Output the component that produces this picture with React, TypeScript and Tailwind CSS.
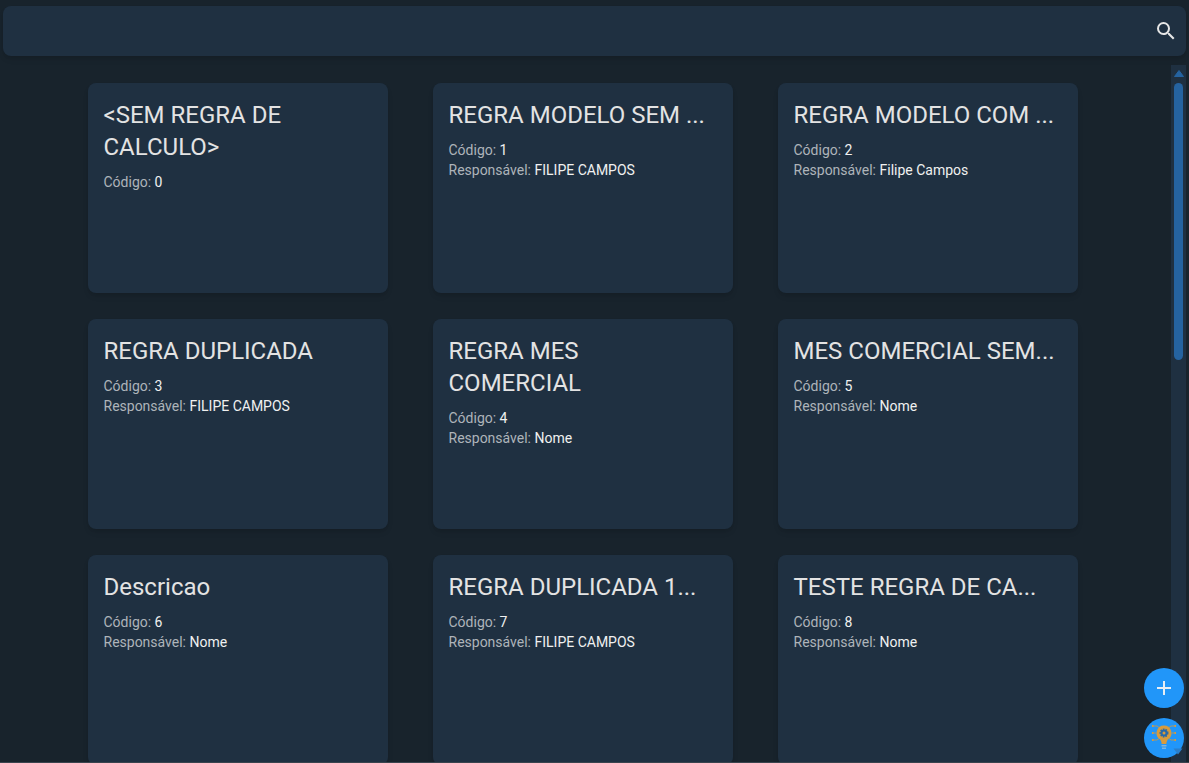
import React from "react";
import { MdAdd, MdSearch } from "react-icons/md";

interface Regra {
    codigo: number;
    titulo: string;
    responsavel?: string;
}

const regras: Regra[] = [
    { codigo: 0, titulo: "<SEM REGRA DE CALCULO>" },
    { codigo: 1, titulo: "REGRA MODELO SEM ...", responsavel: "FILIPE CAMPOS" },
    { codigo: 2, titulo: "REGRA MODELO COM ...", responsavel: "Filipe Campos" },
    { codigo: 3, titulo: "REGRA DUPLICADA", responsavel: "FILIPE CAMPOS" },
    { codigo: 4, titulo: "REGRA MES COMERCIAL", responsavel: "Nome" },
    { codigo: 5, titulo: "MES COMERCIAL SEM...", responsavel: "Nome" },
    { codigo: 6, titulo: "Descricao", responsavel: "Nome" },
    { codigo: 7, titulo: "REGRA DUPLICADA 1...", responsavel: "FILIPE CAMPOS" },
    { codigo: 8, titulo: "TESTE REGRA DE CA...", responsavel: "Nome" },
];

// lamp with a gear inside and circuit traces on both sides
const BulbIcon = () => (
    <svg viewBox="0 0 32 32" className="h-8 w-8">
        <path d="M16 3.500a7.500 7.500 0 0 0-4.500 13.500c1.200 1 2 2.500 2.200 5h4.600c.2-2.500 1-4 2.200-5A7.500 7.500 0 0 0 16 3.500z" fill="#d89b3c" />
        <circle cx="16" cy="11" r="3.500" fill="#2a6aa8" stroke="#2a6aa8" strokeWidth="2" strokeDasharray="1.500 1" />
        <circle cx="16" cy="11" r="1.500" fill="#d89b3c" />
        <rect x="13.500" y="23" width="5" height="1.500" fill="#7fb4dc" />
        <rect x="14" y="25.500" width="4" height="1.500" fill="#7fb4dc" />
        <path d="M11 5.500L9 4H5M8 11H5M11 16.500L9 18H5M21 5.500L23 4H27M24 11H27M21 16.500L23 18H27" fill="none" stroke="#c9974a" strokeWidth="1" opacity="0.85" />
        <path d="M4 4h1.500M4 11h1.500M4 18h1.500M26.500 4H28M26.500 11H28M26.500 18H28" fill="none" stroke="#d89b3c" strokeWidth="2" />
    </svg>
);

const RegraCard = ({ regra }: { regra: Regra }) => (
    <div className="h-[210px] rounded-lg bg-[#1f3041] py-4 pr-[16.5px] pl-[15.5px] shadow-md">
        <h2 className="text-2xl leading-8 font-normal text-[#e3e3e3]">{regra.titulo}</h2>
        <div className="mt-[9px] text-sm leading-5 text-[#aeb4ba]">
            <p>
                Código: <span className="text-[#f0f0f0]">{regra.codigo}</span>
            </p>
            {regra.responsavel && (
                <p>
                    Responsável: <span className="text-[#f0f0f0]">{regra.responsavel}</span>
                </p>
            )}
        </div>
    </div>
);

export default function App() {
    return (
        <div className="relative flex h-screen flex-col overflow-hidden bg-[#18232c] font-['Roboto',sans-serif]">
            <div className="px-[3px] pt-1.5">
                <header className="flex h-[50px] items-center justify-end rounded-lg bg-[#1f3041] pr-2 shadow-md">
                    <MdSearch className="h-6 w-6 text-[#e6e6e6]" />
                </header>
            </div>

            <div className="mt-[9px] flex min-h-0 flex-1 pr-[3px]">
                <main className="min-w-0 flex-1 overflow-hidden pt-[18px] pl-[88px]">
                    <div className="grid grid-cols-[300px_300px_300px] gap-x-[45px] gap-y-[26px]">
                        {regras.map((regra) => (
                            <RegraCard key={regra.codigo} regra={regra} />
                        ))}
                    </div>
                </main>

                {/* scrollbar */}
                <div className="flex w-[15px] flex-col items-center bg-[#1f3041] pt-[5px]">
                    <svg viewBox="0 0 10 7" className="h-[7px] w-2.5">
                        <path d="M5 0.500L9.500 6.500H0.500z" fill="#2563a0" stroke="#2563a0" strokeLinejoin="round" />
                    </svg>
                    <div className="mt-1.5 h-[277px] w-[9px] rounded-full bg-[#2563a0]" />
                </div>
            </div>
            <div className="h-px bg-[#3a444e]" />

            <div className="absolute right-[5px] bottom-[5px] flex flex-col gap-2.5">
                <button className="flex h-10 w-10 items-center justify-center rounded-full bg-[#2196f9] text-[#e8eef4]">
                    <MdAdd className="h-6 w-6" />
                </button>
                <button className="relative flex h-10 w-10 items-center justify-center rounded-full bg-[#2196f9]">
                    <BulbIcon />
                    <svg viewBox="0 0 10 7" className="absolute right-[1px] bottom-[3px] h-[7px] w-2.5">
                        <path d="M5 6.500L9.500 0.500H0.500z" fill="#2a7fcb" />
                    </svg>
                </button>
            </div>
        </div>
    );
}
